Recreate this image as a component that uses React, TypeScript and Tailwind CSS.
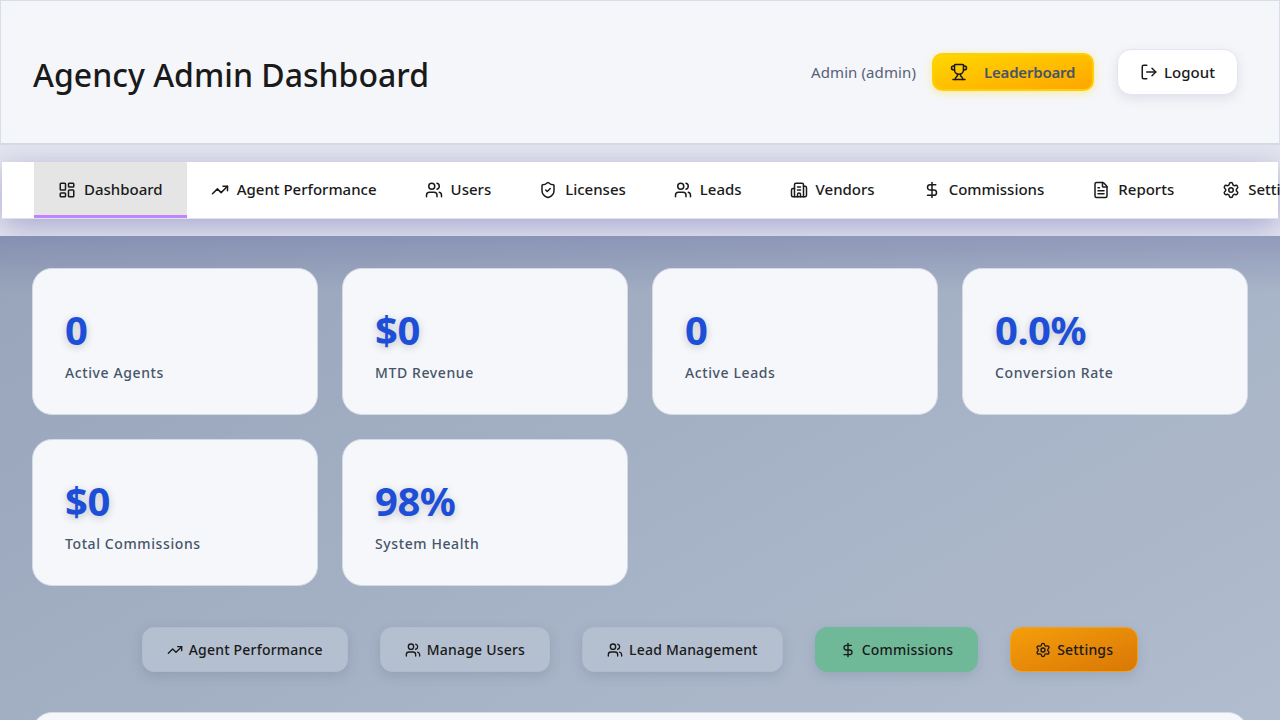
import React from "react";
import {
  LayoutDashboard,
  TrendingUp,
  Users,
  ShieldCheck,
  Building2,
  DollarSign,
  FileText,
  Settings,
  Trophy,
  LogOut,
} from "lucide-react";

const tabs = [
  { label: "Dashboard", icon: LayoutDashboard, active: true },
  { label: "Agent Performance", icon: TrendingUp },
  { label: "Users", icon: Users },
  { label: "Licenses", icon: ShieldCheck },
  { label: "Leads", icon: Users },
  { label: "Vendors", icon: Building2 },
  { label: "Commissions", icon: DollarSign },
  { label: "Reports", icon: FileText },
  { label: "Settings", icon: Settings },
];

const stats = [
  { value: "0", label: "Active Agents" },
  { value: "$0", label: "MTD Revenue" },
  { value: "0", label: "Active Leads" },
  { value: "0.0%", label: "Conversion Rate" },
  { value: "$0", label: "Total Commissions" },
  { value: "98%", label: "System Health" },
];

const greyBtn = "bg-[#b4bfd0] border-[#b0bbcd]";

const actions = [
  { label: "Agent Performance", icon: TrendingUp, cls: greyBtn },
  { label: "Manage Users", icon: Users, cls: greyBtn },
  { label: "Lead Management", icon: Users, cls: greyBtn },
  { label: "Commissions", icon: DollarSign, cls: "bg-[#6fb999] border-[#6fb999]" },
  {
    label: "Settings",
    icon: Settings,
    cls: "bg-gradient-to-br from-[#f59e0b] to-[#d97706] border-[#f0a020]",
  },
];

export default function App() {
  return (
    <div className="h-[720px] overflow-hidden bg-gradient-to-br from-[#939fb6] to-[#b1bdce] font-['Noto_Sans',sans-serif] text-[#1a1a1a]">
      {/* Header */}
      <header className="h-[145px] flex items-center justify-between pl-8 pr-[41px] bg-[#f5f6f9] border border-[#d8dfea] border-b-2 border-b-[#d3d9e5]">
        <h1 className="text-[32px] font-medium text-[#1a1a1a] mt-[6px]">
          Agency Admin Dashboard
        </h1>
        <div className="flex items-center">
          <span className="text-[15px] tracking-[0.1px] text-[#566178] mr-4">
            Admin (admin)
          </span>
          <button className="h-[38px] w-[162px] flex items-center pl-4 gap-4 rounded-[10px] border-2 border-[#ffd000] bg-gradient-to-br from-[#ffd700] to-[#ffa500] shadow-[0_2px_8px_rgba(255,215,0,0.35)] text-[15px] font-semibold tracking-[-0.2px] text-[#475569] mr-[23px]">
            <Trophy size={18} className="text-[#1a1a1a]" />
            Leaderboard
          </button>
          <button className="h-[46px] w-[121px] flex items-center justify-center gap-[6px] rounded-[14px] bg-white border border-[#e2e6f0] shadow-[0_4px_12px_rgba(71,85,120,0.12)] text-[15px] font-medium">
            <LogOut size={18} />
            Logout
          </button>
        </div>
      </header>

      {/* Tabs */}
      <div className="h-[91px] pt-[17px] px-[2px] bg-[#e4e6ef] overflow-hidden relative">
        <nav className="h-[57px] flex pl-8 bg-white border-b border-[#dfe2ec] shadow-[0_8px_32px_rgba(90,90,170,0.45)]">
          {tabs.map((t) => (
            <div
              key={t.label}
              className={`shrink-0 flex items-center gap-2 px-6 pt-[2px] text-[15px] font-medium border-b-[3px] ${
                t.active ? "bg-[#e5e5e5] border-[#c084fc]" : "border-transparent"
              }`}
            >
              <t.icon size={18} />
              {t.label}
            </div>
          ))}
        </nav>
      </div>

      <main className="px-8 pt-8 bg-[linear-gradient(to_bottom,rgba(70,70,150,0.22),rgba(70,70,150,0)_56px)]">
        <div className="grid grid-cols-4 gap-6">
          {stats.map((s) => (
            <div
              key={s.label}
              className="pt-8 px-8 pb-[31px] rounded-[20px] bg-[#f5f7fa] border border-[#d5dbe6]"
            >
              <div className="text-[40px] leading-[57px] font-bold tracking-[-0.5px] text-[#1d4ed8] [text-shadow:0_2px_8px_rgba(0,0,0,0.2)] mb-1">
                {s.value}
              </div>
              <div className="text-[14px] leading-[21px] font-medium tracking-[0.6px] text-[#475569]">
                {s.label}
              </div>
            </div>
          ))}
        </div>

        <div className="flex justify-center gap-8 mt-[41px]">
          {actions.map((a) => (
            <button
              key={a.label}
              className={`h-[45px] flex items-center gap-[6px] px-6 rounded-xl border text-[14px] font-medium tracking-[0.2px] shadow-[0_4px_12px_rgba(71,85,120,0.18)] ${a.cls}`}
            >
              <a.icon size={16} />
              {a.label}
            </button>
          ))}
        </div>

        <div className="mt-10 h-[200px] rounded-[20px] bg-[#f5f7fa] border border-[#d5dbe6]" />
      </main>
    </div>
  );
}
